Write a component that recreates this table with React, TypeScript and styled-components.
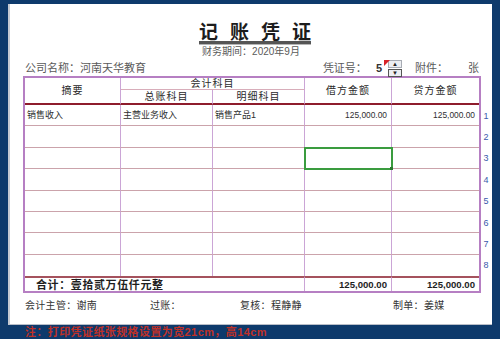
import React from 'react';
import styled, { createGlobalStyle } from 'styled-components';

const GlobalStyle = createGlobalStyle`
  html, body {
    margin: 0;
    padding: 0;
    background: #0e3a6c;
    font-family: "Liberation Sans", "Noto Sans CJK SC", sans-serif;
  }
`;

const CJK = `"Liberation Sans", "Noto Sans CJK SC", sans-serif`;

const Page = styled.div`
  width: 500px;
  height: 339px;
  background: #0e3a6c;
  padding-top: 4px;
  box-sizing: border-box;
  overflow: hidden;
`;

const Paper = styled.div`
  margin: 0 8px;
  height: 321px;
  background: #fff;
  border-left: 2px solid #c6cad2;
  border-bottom: 1px solid #b9bec8;
  box-sizing: border-box;
  padding-top: 20px;
  display: flex;
  flex-direction: column;
`;

const TitleRow = styled.div`
  display: flex;
  justify-content: center;
  padding-left: 8px;
`;

const Title = styled.h1`
  margin: 0;
  display: flex;
  gap: 12px;
  font: 700 19px/17px ${CJK};
  color: #1c1c1c;
  border-bottom: 3px solid #555;
  box-shadow: 0 1px 0 #b5b5b5;
`;

const Period = styled.div`
  margin-top: 2px;
  text-align: center;
  font: 10px/12px ${CJK};
  color: #5a5a5a;
`;

const InfoRow = styled.div`
  margin-top: 2px;
  height: 16px;
  display: flex;
  align-items: center;
  padding: 0 13px 0 15px;
  font: 11px/14px ${CJK};
  color: #5a5a5a;
`;

const Company = styled.span`
  flex: 1;
`;

const Label = styled.span<{ $ml?: number }>`
  margin-left: ${p => p.$ml || 0}px;
`;

const VoucherNo = styled.span`
  margin-left: 9px;
  font-weight: 700;
  color: #333;
`;

const Spinner = styled.span`
  position: relative;
  margin-left: 6px;
  width: 14px;
  height: 16px;
  display: flex;
  flex-direction: column;
  gap: 1px;
  &::before {
    content: '';
    position: absolute;
    left: -4px;
    top: 0;
    border-top: 3px solid #d8242a;
    border-left: 3px solid #d8242a;
    border-right: 3px solid transparent;
    border-bottom: 3px solid transparent;
  }
`;

const SpinBtn = styled.span<{ $framed?: boolean }>`
  flex: 1;
  display: flex;
  align-items: center;
  justify-content: center;
  font-size: 6px;
  line-height: 1;
  color: #222;
  background: #eceef2;
  border: 1px solid ${p => (p.$framed ? '#555' : '#a8acb4')};
`;

const Body = styled.div`
  display: flex;
  padding-left: 13px;
`;

const Sheet = styled.div`
  display: grid;
  grid-template-columns: 96px 92px 92px 87px 87px;
  grid-template-rows: 12px 15px repeat(8, 21.375px) 15px;
  width: 458px;
  border: 2px solid #b67fc3;
  box-sizing: border-box;
`;

type CellProps = {
  $col: number;
  $row: number;
  $colSpan?: number;
  $rowSpan?: number;
  $last?: boolean;
  $bottom?: string;
  $top?: string;
};

const Cell = styled.div<CellProps>`
  position: relative;
  grid-column: ${p => p.$col} / span ${p => p.$colSpan || 1};
  grid-row: ${p => p.$row} / span ${p => p.$rowSpan || 1};
  box-sizing: border-box;
  display: flex;
  align-items: center;
  border-right: ${p => (p.$last ? 'none' : '1px solid #cba5d6')};
  border-bottom: ${p => p.$bottom || 'none'};
  border-top: ${p => p.$top || 'none'};
  overflow: hidden;
  white-space: nowrap;
`;

const HeadCell = styled(Cell)`
  justify-content: center;
  font: 10px/12px ${CJK};
  letter-spacing: 1px;
  color: #2a2a2a;
`;

const DataCell = styled(Cell)<{ $num?: boolean; $selected?: boolean }>`
  justify-content: ${p => (p.$num ? 'flex-end' : 'flex-start')};
  padding: 0 4px 0 2px;
  font: ${p => (p.$num ? '8.4px' : '9px')} / 11px ${CJK};
  color: #2f2f2f;
  ${p =>
    p.$selected &&
    `
    outline: 2px solid #3a9c3f;
    outline-offset: -1px;
    z-index: 1;
    overflow: visible;
    &::after {
      content: '';
      position: absolute;
      right: -2px;
      bottom: -2px;
      width: 3px;
      height: 3px;
      background: #2c7a31;
    }
  `}
`;

const TotalCell = styled(Cell)<{ $num?: boolean }>`
  justify-content: ${p => (p.$num ? 'flex-end' : 'flex-start')};
  padding: ${p => (p.$num ? '0 4px 0 0' : '0 0 0 11px')};
  font: 700 ${p => (p.$num ? '9.6px' : '11px')} / 12px ${CJK};
  letter-spacing: ${p => (p.$num ? 0 : 0.6)}px;
  color: #1e1e1e;
`;

const RowNums = styled.div`
  width: 10px;
  padding-top: 29px;
  display: flex;
  flex-direction: column;
`;

const RowNum = styled.div`
  height: 21.375px;
  display: flex;
  align-items: center;
  justify-content: center;
  font: 9px/10px "Liberation Sans", sans-serif;
  color: #3a59ab;
`;

const Footer = styled.div`
  margin-top: 6px;
  padding-left: 15px;
  display: grid;
  grid-template-columns: 125px 90px 153px 1fr;
  font: 10px/14px ${CJK};
  letter-spacing: 0.3px;
  color: #333;
`;

const Note = styled.div`
  margin-left: 25px;
  margin-top: 1px;
  font: 700 11px/12px ${CJK};
  letter-spacing: 0.4px;
  color: #bf3128;
`;

const rowBorder = '1px solid #cba3ab';
const headBorder = '2px solid #8e1c2c';
const totalBorder = '2px solid #a5525d';

const rows = [
  { summary: '销售收入', general: '主营业务收入', detail: '销售产品1', debit: '125,000.00', credit: '125,000.00' },
  ...Array.from({ length: 7 }, () => ({ summary: '', general: '', detail: '', debit: '', credit: '' })),
];

export default function App() {
  return (
    <Page>
      <GlobalStyle />
      <Paper>
        <TitleRow>
          <Title>
            {'记账凭证'.split('').map(c => (
              <span key={c}>{c}</span>
            ))}
          </Title>
        </TitleRow>
        <Period>财务期间：2020年9月</Period>
        <InfoRow>
          <Company>公司名称：河南天华教育</Company>
          <Label>凭证号：</Label>
          <VoucherNo>5</VoucherNo>
          <Spinner>
            <SpinBtn>▲</SpinBtn>
            <SpinBtn $framed>▼</SpinBtn>
          </Spinner>
          <Label $ml={13}>附件：</Label>
          <Label $ml={20}>张</Label>
        </InfoRow>
        <Body>
          <Sheet>
            <HeadCell $col={1} $row={1} $rowSpan={2} $bottom={headBorder}>摘要</HeadCell>
            <HeadCell $col={2} $row={1} $colSpan={2} $bottom="1px solid #d8adba">会计科目</HeadCell>
            <HeadCell $col={2} $row={2} $bottom={headBorder}>总账科目</HeadCell>
            <HeadCell $col={3} $row={2} $bottom={headBorder}>明细科目</HeadCell>
            <HeadCell $col={4} $row={1} $rowSpan={2} $bottom={headBorder}>借方金额</HeadCell>
            <HeadCell $col={5} $row={1} $rowSpan={2} $bottom={headBorder} $last>贷方金额</HeadCell>

            {rows.map((r, i) => {
              const row = i + 3;
              const bottom = i < rows.length - 1 ? rowBorder : 'none';
              return (
                <React.Fragment key={i}>
                  <DataCell $col={1} $row={row} $bottom={bottom}>{r.summary}</DataCell>
                  <DataCell $col={2} $row={row} $bottom={bottom}>{r.general}</DataCell>
                  <DataCell $col={3} $row={row} $bottom={bottom}>{r.detail}</DataCell>
                  <DataCell $col={4} $row={row} $bottom={bottom} $num $selected={i === 2}>{r.debit}</DataCell>
                  <DataCell $col={5} $row={row} $bottom={bottom} $num $last>{r.credit}</DataCell>
                </React.Fragment>
              );
            })}

            <TotalCell $col={1} $row={11} $colSpan={3} $top={totalBorder}>合计：壹拾贰万伍仟元整</TotalCell>
            <TotalCell $col={4} $row={11} $top={totalBorder} $num>125,000.00</TotalCell>
            <TotalCell $col={5} $row={11} $top={totalBorder} $num $last>125,000.00</TotalCell>
          </Sheet>
          <RowNums>
            {rows.map((_, i) => (
              <RowNum key={i}>{i + 1}</RowNum>
            ))}
          </RowNums>
        </Body>
        <Footer>
          <span>会计主管：谢南</span>
          <span>过账：</span>
          <span>复核：程静静</span>
          <span>制单：姜媒</span>
        </Footer>
      </Paper>
      <Note>注：打印凭证纸张规格设置为宽21cm，高14cm</Note>
    </Page>
  );
}
